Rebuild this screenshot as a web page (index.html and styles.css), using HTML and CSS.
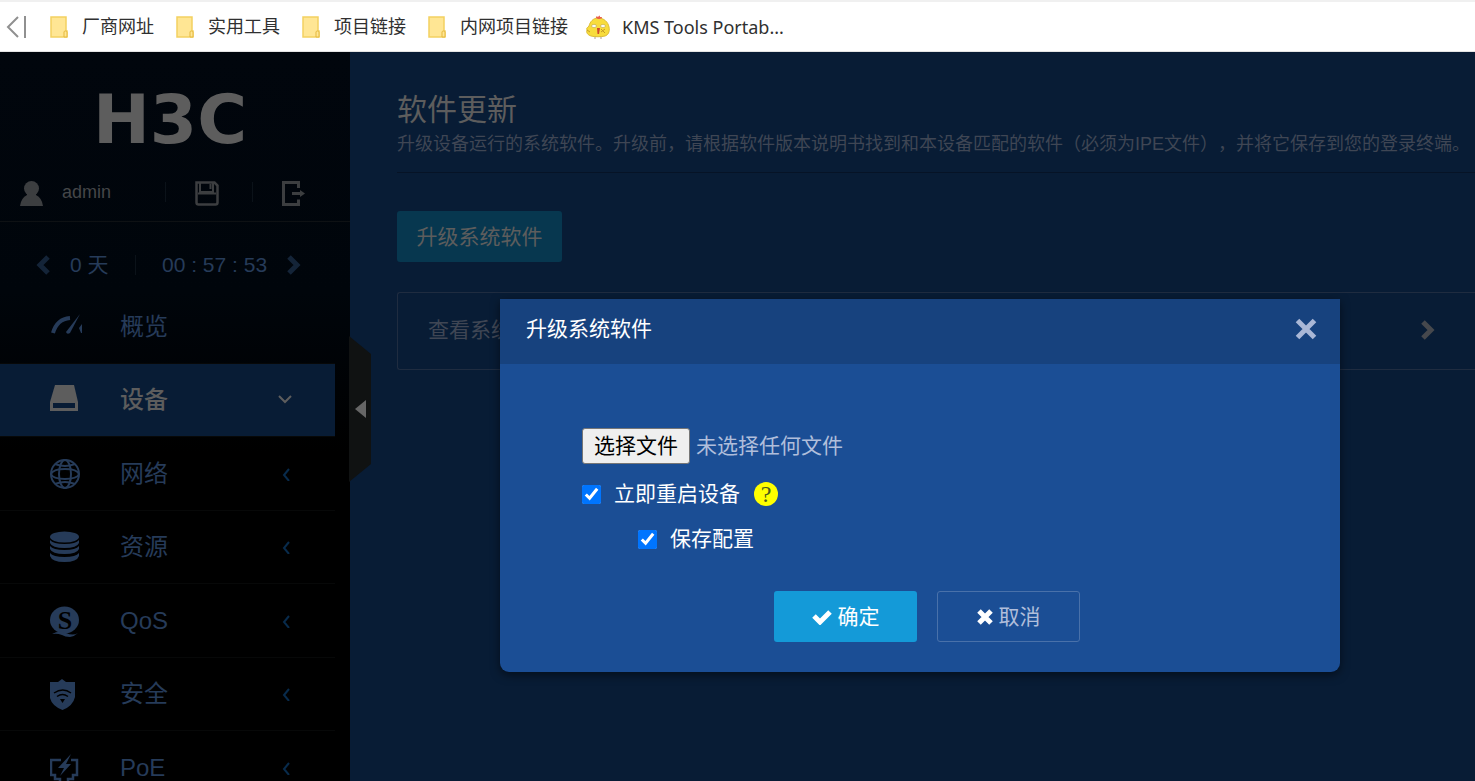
FILE: index.html
```html
<!DOCTYPE html>
<html lang="zh-CN">
<head>
  <meta charset="UTF-8">
  <meta name="viewport" content="width=device-width, initial-scale=1.0">
  <title>软件更新</title>
  <link rel="stylesheet" href="styles.css">
</head>
<body>

  <!-- Bookmarks bar -->
  <div class="bookmarks">
    <svg class="bar-back" width="22" height="22" viewBox="0 0 22 22" fill="none" stroke="#909090" stroke-width="2">
      <path d="M12 1 L2 11 L12 21 M19 0 V22"/>
    </svg>
    <a href="#" class="bookmark">
      <svg width="18" height="22" viewBox="0 0 18 22"><path d="M1 1h15v14h1v6H1z" fill="#ffe694" stroke="#f3d160" stroke-width="1.500"/><path d="M14 21v-5q0-1 1.500-1t1.500 1v5z" fill="#ffe694" stroke="#e5b93e"/></svg>
      <span>厂商网址</span>
    </a>
    <a href="#" class="bookmark">
      <svg width="18" height="22" viewBox="0 0 18 22"><path d="M1 1h15v14h1v6H1z" fill="#ffe694" stroke="#f3d160" stroke-width="1.500"/><path d="M14 21v-5q0-1 1.500-1t1.500 1v5z" fill="#ffe694" stroke="#e5b93e"/></svg>
      <span>实用工具</span>
    </a>
    <a href="#" class="bookmark">
      <svg width="18" height="22" viewBox="0 0 18 22"><path d="M1 1h15v14h1v6H1z" fill="#ffe694" stroke="#f3d160" stroke-width="1.500"/><path d="M14 21v-5q0-1 1.500-1t1.500 1v5z" fill="#ffe694" stroke="#e5b93e"/></svg>
      <span>项目链接</span>
    </a>
    <a href="#" class="bookmark">
      <svg width="18" height="22" viewBox="0 0 18 22"><path d="M1 1h15v14h1v6H1z" fill="#ffe694" stroke="#f3d160" stroke-width="1.500"/><path d="M14 21v-5q0-1 1.500-1t1.500 1v5z" fill="#ffe694" stroke="#e5b93e"/></svg>
      <span>内网项目链接</span>
    </a>
    <a href="#" class="bookmark site">
      <svg width="24" height="24" viewBox="0 0 24 24">
        <path d="M9 21v3M15 21v3" stroke="#c9c0b8" stroke-width="1.500"/>
        <path d="M12 3c6 0 10 4 11 9 1 5-1 8-4 9-4 1-10 1-14 0-3-1-5-3-4-6-1-3 1-2 2-4C4 7 7 3 12 3z" fill="#f8dc3c" stroke="#dcbc34"/>
        <path d="M10 3q0-3 2-1 2-3 2 0h2q0 2-4 2z" fill="#e8604c"/>
        <ellipse cx="8" cy="11" rx="2.500" ry="1.500" fill="#fff" stroke="#b5a04a" stroke-width=".6"/>
        <ellipse cx="17" cy="11" rx="2.500" ry="1.500" fill="#fff" stroke="#b5a04a" stroke-width=".6"/>
        <path d="M11 13h3l-1 6h-1.500z" fill="#cf4a2c"/>
        <path d="M15 14l4 4M15 17l4-3M1 15l3 2" stroke="#c49b28" fill="none"/>
      </svg>
      <span>KMS Tools Portab...</span>
    </a>
  </div>

  <div class="page">

    <!-- Sidebar -->
    <div class="sidebar">
      <div class="logo">H3C</div>

      <div class="user-row">
        <svg width="23" height="25" viewBox="0 0 23 25" fill="#3c3e40"><circle cx="11.500" cy="7.500" r="7.500"/><path d="M7 12h9v2q6 3 7 11H0q1-8 7-11z"/></svg>
        <span class="user-name">admin</span>
        <span class="divider"></span>
        <button type="button" class="icon-button" aria-label="保存">
          <svg width="24" height="25" viewBox="0 0 24 25" fill="none" stroke="#3c3e40" stroke-width="2.500"><path d="M1.500 1.500h18l3 3v17q0 2-2 2H3.500q-2 0-2-2z"/><path d="M5 2v9h13V2M3 12.500h18" stroke-width="2"/><path d="M15.500 3v5" stroke-width="2"/></svg>
        </button>
        <span class="divider"></span>
        <button type="button" class="icon-button" aria-label="退出">
          <svg width="24" height="25" viewBox="0 0 24 25" fill="none" stroke="#3c3e40" stroke-width="3"><path d="M16.500 7V1.500h-15v22h15v-5"/><path d="M10 12.500h9"/><path d="M18 9l5 3.500-5 3.500z" fill="#3c3e40" stroke="none"/></svg>
        </button>
      </div>

      <div class="uptime">
        <svg width="14" height="20" viewBox="0 0 14 20" fill="none" stroke="#142438" stroke-width="5"><path d="M12 2 L4 10 L12 18"/></svg>
        <span class="days">0 天</span>
        <span class="divider"></span>
        <span class="time">00 : 57 : 53</span>
        <svg width="14" height="20" viewBox="0 0 14 20" fill="none" stroke="#142438" stroke-width="5"><path d="M2 2 L10 10 L2 18"/></svg>
      </div>

      <div class="nav">
        <a href="#" class="nav-item">
          <svg class="nav-icon" viewBox="0 0 32 32"><path d="M3 22q4-14 17-15" fill="none" stroke="#263b59" stroke-width="4"/><path d="M30 3L20 22q-3 2-4-1z" fill="#263b59"/><path d="M29 17l3-4v9h-1z" fill="#263b59"/></svg>
          <span>概览</span>
        </a>
        <a href="#" class="nav-item active">
          <svg class="nav-icon" viewBox="0 0 32 32"><path d="M5 1h19l4 17v9H0v-9z" fill="#5d5d5d"/><path d="M3 19h22v5H3z" fill="#081c35"/></svg>
          <span>设备</span>
          <svg class="arrow" viewBox="0 0 14 14" fill="none" stroke="#5d5d5d" stroke-width="2"><path d="M1 3l6 6 6-6"/></svg>
        </a>
        <a href="#" class="nav-item">
          <svg class="nav-icon" viewBox="0 0 32 32" fill="none" stroke="#263b59" stroke-width="2"><circle cx="15" cy="16" r="14"/><ellipse cx="15" cy="16" rx="6" ry="14"/><path d="M1 16q2-5 14-5t14 5M1 16q2 5 14 5t14-5M5 6q10 4 20 0M5 26q10-4 20 0"/></svg>
          <span>网络</span>
          <svg class="arrow" viewBox="0 0 14 14" fill="none" stroke="#082b4c" stroke-width="2"><path d="M11 2L6 8l5 6"/></svg>
        </a>
        <a href="#" class="nav-item">
          <svg class="nav-icon" viewBox="0 0 32 32" fill="#263b59"><ellipse cx="14.500" cy="6" rx="14.500" ry="5.500"/><path d="M0 9q3 4 14.500 4T29 9v3q-2 5-14.500 5T0 12zM0 15q3 4 14.500 4T29 15v3q-2 5-14.500 5T0 18zM0 22q3 4 14.500 4T29 22v3q-2 6-14.500 6T0 25z"/></svg>
          <span>资源</span>
          <svg class="arrow" viewBox="0 0 14 14" fill="none" stroke="#082b4c" stroke-width="2"><path d="M11 2L6 8l5 6"/></svg>
        </a>
        <a href="#" class="nav-item">
          <svg class="nav-icon" viewBox="0 0 32 32"><ellipse cx="14.500" cy="15" rx="14.500" ry="13.500" fill="#263b59"/><path d="M2 29q7-4 14-1 7 3 12 0-3 3-8 4-5 0-8-2-5-2-10-1z" fill="#263b59"/><text x="15" y="24" text-anchor="middle" class="qos-mark">S</text></svg>
          <span>QoS</span>
          <svg class="arrow" viewBox="0 0 14 14" fill="none" stroke="#082b4c" stroke-width="2"><path d="M11 2L6 8l5 6"/></svg>
        </a>
        <a href="#" class="nav-item">
          <svg class="nav-icon" viewBox="0 0 32 32"><path d="M12 1l4 3h9v15q-2 9-12.500 13Q2 28 0 20V4h8z" fill="#263b59"/><path d="M4 15q9-6 17 0M7 18.500q5.500-4 11 0" fill="none" stroke="#000" stroke-width="1.500"/><path d="M10 21h5l-2.500 4z" fill="#000"/></svg>
          <span>安全</span>
          <svg class="arrow" viewBox="0 0 14 14" fill="none" stroke="#082b4c" stroke-width="2"><path d="M11 2L6 8l5 6"/></svg>
        </a>
        <a href="#" class="nav-item">
          <svg class="nav-icon" viewBox="0 0 32 32"><path d="M11 8H1v15h4v4h5v5M21 8h6v15h-4v4h-5v5" fill="none" stroke="#263b59" stroke-width="2.500"/><path d="M21 2L8 16h6l-4 8 11-12h-5z" fill="#263b59"/></svg>
          <span>PoE</span>
          <svg class="arrow" viewBox="0 0 14 14" fill="none" stroke="#082b4c" stroke-width="2"><path d="M11 2L6 8l5 6"/></svg>
        </a>
      </div>

      <button type="button" class="collapse" aria-label="收起">
        <svg width="11" height="18" viewBox="0 0 11 18" fill="#666"><path d="M11 0v18L0 9z"/></svg>
      </button>
    </div>

    <!-- Content -->
    <div class="content">
      <h1>软件更新</h1>
      <p class="description">升级设备运行的系统软件。升级前，请根据软件版本说明书找到和本设备匹配的软件（必须为IPE文件），并将它保存到您的登录终端。</p>

      <button type="button" class="upgrade-button">升级系统软件</button>

      <a href="#" class="panel-link">
        <span>查看系统</span>
        <svg width="14" height="20" viewBox="0 0 14 20" fill="none" stroke="#46484d" stroke-width="5"><path d="M2 2 L10 10 L2 18"/></svg>
      </a>

      <!-- Upgrade dialog -->
      <div class="dialog" role="dialog" aria-labelledby="dialog-title">
        <div class="dialog-header">
          <h2 id="dialog-title">升级系统软件</h2>
          <button type="button" class="close" aria-label="关闭">
            <svg width="22" height="22" viewBox="0 0 22 22" stroke="#a9b7d6" stroke-width="5"><path d="M2.500 2.500l17 17M19.500 2.500l-17 17"/></svg>
          </button>
        </div>
        <form class="dialog-body">
          <div class="file-row">
            <input type="file" id="ipe-file" class="file-input">
            <label for="ipe-file" class="file-button">选择文件</label>
            <span>未选择任何文件</span>
          </div>
          <div class="check-row">
            <input type="checkbox" id="reboot" checked>
            <label for="reboot">立即重启设备</label>
            <span class="help">?</span>
          </div>
          <div class="check-row nested">
            <input type="checkbox" id="save-config" checked>
            <label for="save-config">保存配置</label>
          </div>
          <div class="dialog-footer">
            <button type="button" class="btn btn-ok">
              <svg width="20" height="16" viewBox="0 0 20 16" fill="none" stroke="#fff" stroke-width="5"><path d="M2 7l6 6L18 3"/></svg>
              确定
            </button>
            <button type="button" class="btn btn-cancel">
              <svg width="16" height="16" viewBox="0 0 16 16" stroke="#fff" stroke-width="5"><path d="M2 2l12 12M14 2L2 14"/></svg>
              取消
            </button>
          </div>
        </form>
      </div>
    </div>
  </div>

</body>
</html>
```
FILE: styles.css
```css
* {
  box-sizing: border-box;
}

body {
  margin: 0;
  height: 100vh;
  display: flex;
  flex-direction: column;
  overflow: hidden;
  font-family: "Liberation Sans", "Noto Sans CJK SC", sans-serif;
  font-size: 21px;
  line-height: 24px;
  background-color: #081c35;
}

a {
  text-decoration: none;
}

button {
  font-family: inherit;
  font-size: 21px;
  line-height: inherit;
  padding: 0;
  border: none;
  background: none;
  cursor: pointer;
}

h1, h2, p {
  margin: 0;
  font-weight: normal;
}

svg {
  display: block;
  flex-shrink: 0;
}

/* Bookmarks bar */
.bookmarks {
  display: flex;
  align-items: center;
  flex-shrink: 0;
  height: 52px;
  padding-left: 6px;
  background-color: #fff;
  border-top: 2px solid #f0f0f0;
  border-bottom: 1px solid #e4e4e4;
  white-space: nowrap;
}

.bar-back {
  margin-right: 22px;
}

.bookmark {
  display: flex;
  align-items: center;
  gap: 14px;
  margin-right: 22px;
  color: #303030;
  font-family: "Liberation Sans", "Noto Sans CJK SC", sans-serif;
  font-size: 18px;
}

.bookmark.site {
  gap: 12px;
  margin-left: -4px;
  font-family: "Noto Sans", sans-serif;
}

.page {
  display: flex;
  flex: 1;
  min-height: 0;
}

/* Sidebar */
.sidebar {
  position: relative;
  z-index: 1;
  width: 350px;
  flex-shrink: 0;
  background: linear-gradient(#01060d, #00050b 240px, #000 400px);
}

.logo {
  height: 110px;
  padding: 28px 10px 0 0;
  text-align: center;
  color: #5d5d5d;
  font: bold 68px/80px "DejaVu Sans", sans-serif;
}

.user-row {
  display: flex;
  align-items: center;
  height: 60px;
  padding-left: 20px;
  border-bottom: 1px solid #0e1114;
}

.user-row svg {
  margin-top: 4px;
}

.user-name {
  width: 103px;
  margin-left: 19px;
  color: #454749;
  font-size: 18px;
}

.divider {
  width: 1px;
  height: 20px;
  background-color: #0b1219;
}

.icon-button {
  margin: 0 33px 0 29px;
}

.uptime {
  display: flex;
  align-items: center;
  height: 68px;
  padding: 18px 0 0 36px;
  color: #263b59;
}

.days {
  width: 65px;
  margin-left: 20px;
}

.time {
  margin: 0 20px 0 26px;
}

.nav-item {
  display: flex;
  align-items: center;
  width: 335px;
  height: 74px;
  padding: 0 43px 0 50px;
  color: #263b59;
  font-size: 24px;
  border-bottom: 1px solid #070808;
}

.nav-item:nth-child(even) {
  height: 73px;
}

.nav-item.active {
  color: #5d5d5d;
  background-color: #081c35;
  font-weight: 500;
}

.nav-icon {
  width: 32px;
  height: 32px;
  margin-right: 38px;
}

.arrow {
  width: 14px;
  height: 14px;
  margin-left: auto;
}

.qos-mark {
  font: bold 26px "Liberation Serif", serif;
  fill: #000;
}

.collapse {
  position: absolute;
  top: 284px;
  left: 349px;
  display: flex;
  align-items: center;
  width: 22px;
  height: 146px;
  padding-left: 6px;
  background-color: #101212;
  clip-path: polygon(0 0, 100% 18px, 100% 128px, 0 100%);
}

/* Content */
.content {
  position: relative;
  flex: 1;
  min-width: 0;
  padding: 36px 0 0 47px;
  background-color: #081c35;
}

h1 {
  color: #5d5d5d;
  font-size: 30px;
  line-height: 44px;
}

.description {
  padding-bottom: 16px;
  color: #3f4654;
  font-size: 18px;
  white-space: nowrap;
  text-spacing-trim: space-all;
  border-bottom: 1px solid #061326;
}

.upgrade-button {
  display: block;
  width: 165px;
  height: 51px;
  margin: 38px 0 30px;
  color: #5d5d5d;
  background-color: #07374f;
  border-radius: 3px;
}

.panel-link {
  display: flex;
  align-items: center;
  justify-content: space-between;
  height: 78px;
  padding: 0 40px 2px 30px;
  color: #3f4654;
  border: 1px solid #1f2c40;
  border-right: none;
  border-radius: 3px 0 0 3px;
}

/* Dialog */
.dialog {
  position: absolute;
  top: 247px;
  left: 150px;
  width: 840px;
  background-color: #1b4e95;
  border-radius: 0 0 9px 9px;
  box-shadow: 0 3px 10px rgba(0, 0, 0, 0.5);
}

.dialog-header {
  display: flex;
  align-items: center;
  justify-content: space-between;
  height: 65px;
  padding: 0 23px 6px 26px;
  background-color: #17427e;
}

h2 {
  color: #fff;
  font-size: 21px;
}

.dialog-body {
  padding: 64px 82px 30px;
}

.file-row {
  position: relative;
  display: flex;
  align-items: center;
  gap: 6px;
  height: 36px;
  color: #b0bedb;
}

.file-input {
  position: absolute;
  width: 108px;
  height: 36px;
  opacity: 0;
}

.file-button {
  width: 108px;
  height: 36px;
  color: #000;
  line-height: 34px;
  text-align: center;
  background-color: #efefef;
  border: 1px solid #767676;
  border-radius: 3px;
}

.check-row {
  display: flex;
  align-items: center;
  height: 30px;
  margin-top: 15px;
  color: #fff;
}

.check-row.nested {
  margin-left: 56px;
}

.check-row input {
  width: 19px;
  height: 19px;
  margin: 0 13px 0 0;
  accent-color: #0075ff;
}

.help {
  width: 24px;
  height: 24px;
  margin-left: 14px;
  color: #4a5a1c;
  font: 24px/24px "Liberation Serif", serif;
  text-align: center;
  background-color: #ff0;
  border-radius: 50%;
}

.dialog-footer {
  display: flex;
  justify-content: center;
  gap: 20px;
  margin-top: 37px;
  padding-left: 14px;
}

.btn {
  display: flex;
  align-items: center;
  justify-content: center;
  gap: 6px;
  width: 143px;
  height: 51px;
  border-radius: 3px;
}

.btn-ok {
  color: #fff;
  background-color: #149ad8;
}

.btn-cancel {
  color: #b0bedb;
  border: 1px solid #4971aa;
}
```
